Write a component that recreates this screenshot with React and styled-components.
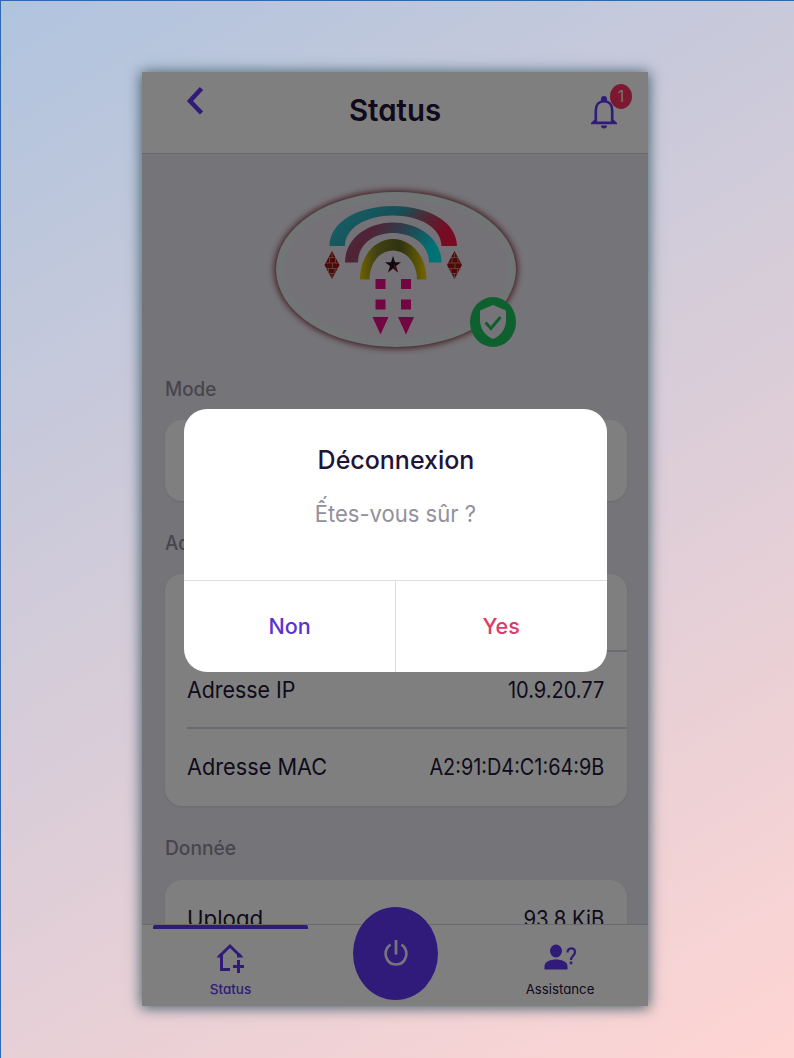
import React from 'react';
import styled, { createGlobalStyle } from 'styled-components';

const Global = createGlobalStyle`
  * { box-sizing: border-box; }
  body {
    margin: 0;
    font-family: Inter, "Noto Sans", sans-serif;
    font-feature-settings: "cv11" 1;
    color: #201438;
  }
  button { font: inherit; font-feature-settings: inherit; border: 0; padding: 0; background: none; }
`;

const Page = styled.div`
  height: 1058px;
  padding: 71px 0 0 141px;
  border: solid #2f67b0;
  border-width: 1px 0 0 1px;
  background: linear-gradient(149deg, #b0c4de 0%, #ffd5d3 100%);
`;

const Phone = styled.div`
  position: relative;
  width: 506px;
  height: 934px;
  display: flex;
  flex-direction: column;
  background: #ebe9f3;
  box-shadow: 0 1px 13px 1px #40606c;
`;

const Header = styled.header`
  height: 82px;
  flex: none;
  display: grid;
  grid-template-columns: 100px 1fr 100px;
  background: #fff;
  border-bottom: 1px solid #d4d2de;
`;

const Back = styled.button`
  align-self: start;
  padding: 14px 0 0 44px;
  text-align: left;
  svg { display: block; }
`;

const Heading = styled.h1`
  margin: 0;
  padding-top: 19px;
  text-align: center;
  font-size: 30px;
  line-height: 38px;
  font-weight: 600;
`;

const Bell = styled.div`
  position: relative;
  padding: 22px 0 0 41px;
  svg { display: block; }
`;

const Count = styled.span`
  position: absolute;
  left: 62px;
  top: 12px;
  width: 22px;
  height: 25px;
  border-radius: 50%;
  background: #f8315f;
  color: #f2dfe8;
  font-size: 16px;
  line-height: 25px;
  text-align: center;
`;

const Main = styled.main`
  flex: 1;
  min-height: 0;
  overflow: hidden;
  padding: 38px 21px 0 23px;
`;

const Emblem = styled.div`
  position: relative;
  width: 240px;
  height: 155px;
  margin-left: 111px;
  border: 8px solid #e3eaea;
  border-radius: 50%;
  background: #e9e4ec;
  box-shadow: 0 0 7px 1px #6e1a1e;
`;

const EmblemArt = styled.svg`
  display: block;
  margin: 6px 0 0 40px;
`;

const Shield = styled.div`
  position: absolute;
  left: 186px;
  top: 97px;
  width: 46px;
  height: 50px;
  border-radius: 50%;
  background: #1cc35d;
  display: grid;
  place-items: center;
`;

const SectionTitle = styled.h2`
  margin: 30px 0 ${(p) => p.$gap || 19}px;
  height: 24px;
  font-size: 19.5px;
  line-height: 24px;
  font-weight: 500;
  color: #8f8b9a;
`;

const Card = styled.section`
  min-height: 81px;
  padding-left: 22px;
  border-radius: 17px;
  background: #fff;
  box-shadow: 0 1px 3px #d5d3de;
`;

const AddressCard = styled(Card)`
  height: 232px;
`;

const Row = styled.div`
  height: 77px;
  padding-right: 23px;
  display: flex;
  align-items: center;
  justify-content: space-between;
  font-size: 22.5px;
  & + & { border-top: 2px solid #d7d5e3; }
`;

const EmptyRow = styled.div`
  height: 76px;
  & + ${Row} { border-top: 2px solid #d7d5e3; }
`;

const Label = styled.span`
  display: inline-block;
  transform: scaleX(${(p) => p.$fit || 1});
  transform-origin: ${(p) => p.$from || 'center'};
`;

const Nav = styled.nav`
  height: 82px;
  flex: none;
  display: grid;
  grid-template-columns: 155px 1fr 155px;
  padding: 0 10px 0 11px;
  background: #fff;
  border-top: 1px solid #d4d2de;
`;

const Tab = styled.div`
  border-top: 4px solid ${(p) => (p.$active ? '#6038f0' : 'transparent')};
  border-radius: 2px;
  padding-top: 13px;
  display: flex;
  flex-direction: column;
  align-items: center;
  gap: 6px;
  font-size: 13.5px;
  line-height: 18px;
  font-weight: ${(p) => (p.$active ? 500 : 400)};
  color: ${(p) => (p.$active ? '#6038f0' : '#201438')};
  svg { display: block; margin-right: 1px; }
`;

const Power = styled.button`
  width: 85px;
  height: 93px;
  margin-top: -18px;
  padding-bottom: 3px;
  justify-self: center;
  border-radius: 50%;
  background: #6035f5;
  display: grid;
  place-items: center;
`;

const Backdrop = styled.div`
  position: absolute;
  inset: 0;
  padding: 336.5px 41px 0 42px;
  background: rgba(0, 0, 0, 0.5);
`;

const Dialog = styled.div`
  height: 263px;
  border-radius: 23px;
  overflow: hidden;
  background: #fff;
  display: flex;
  flex-direction: column;
`;

const DialogBody = styled.div`
  flex: 1;
  padding-top: 35px;
  text-align: center;
`;

const DialogTitle = styled.div`
  font-size: 25.5px;
  line-height: 32px;
  font-weight: 500;
`;

const DialogText = styled.div`
  margin-top: 22px;
  font-size: 22.5px;
  line-height: 32px;
  color: #93909c;
`;

const Actions = styled.div`
  height: 91.5px;
  display: grid;
  grid-template-columns: 212px 1fr;
  border-top: 1.5px solid #dddde3;
`;

const Action = styled.button`
  color: ${(p) => p.$color};
  font-size: 22px;
  font-weight: 500;
  &:first-child { border-right: 1px solid #dddde3; }
`;

const Brick = ({ x }) => (
  <g transform={`translate(${x} 45)`}>
    <path d="M7.5 0L15 14 7.5 28 0 14Z" fill="#a5120c" />
    <path d="M4 6.5H11M1 12H14M1.5 17.5H13.500M4 22.500H11M7.500 2V6.500M5 6.500V12M11 6.500V12M8 12V17.500M4 17.500V22M10.500 17.500V22.500M7.500 22.500V27" stroke="#b99a9f" strokeWidth=".8" />
  </g>
);

export default function App() {
  return (
    <>
      <Global />
      <Page>
        <Phone>
          <Header>
            <Back aria-label="Retour">
              <svg width="19" height="30" viewBox="0 0 19 30" fill="none">
                <path d="M15.500 2.500L4 15 15.500 27" stroke="#6038f0" strokeWidth="4.600" />
              </svg>
            </Back>
            <Heading><Label $fit={0.98}>Status</Label></Heading>
            <Bell>
              <svg width="30" height="36" viewBox="0 0 30 36">
                <path d="M6.800 28V16.500C6.800 10.500 10 7.200 15 7.200S23.200 10.500 23.200 16.500V28" fill="none" stroke="#6038f0" strokeWidth="2.600" />
                <path d="M12 7V5a3 3 0 0 1 6 0V7ZM5.500 25.500L8 27.500H22L24.500 25.500 28 29v1.200H2V29ZM12 31.500h6a3 3 0 0 1-6 0Z" fill="#6038f0" />
              </svg>
              <Count>1</Count>
            </Bell>
          </Header>
          <Main>
            <Emblem>
              <EmblemArt width="146" height="130" viewBox="0 0 146 130">
                <defs>
                  <linearGradient id="outer" x1="0" y1="0" x2="1" y2="0.3">
                    <stop offset="0" stopColor="#27c7cf" /><stop offset=".55" stopColor="#309eae" />
                    <stop offset=".72" stopColor="#8a6076" /><stop offset="1" stopColor="#ee1647" />
                  </linearGradient>
                  <linearGradient id="middle" x1="0" y1="0" x2="1" y2="0.3">
                    <stop offset="0" stopColor="#7e6a96" /><stop offset=".3" stopColor="#a44368" />
                    <stop offset=".65" stopColor="#4c8aa2" /><stop offset="1" stopColor="#00e5ec" />
                  </linearGradient>
                  <linearGradient id="inner" x1="0" y1="0" x2="1" y2="0">
                    <stop offset="0" stopColor="#d9c400" /><stop offset=".25" stopColor="#85832b" />
                    <stop offset=".6" stopColor="#5d6521" /><stop offset="1" stopColor="#e8cd00" />
                  </linearGradient>
                </defs>
                <path d="M5.500 40C5.500 16 34 0 69 0S133 16 133 40H117.500C117.500 22 96 9.500 69 9.500S21 22 21 40Z" fill="url(#outer)" />
                <path d="M21 56.500C21 33 43 16.500 69 16.500S117.500 33 117.500 56.500H105C105 39 89 27 69 27S34 39 34 56.500Z" fill="url(#middle)" />
                <path d="M36 73.500C36 51 50 33 69 33S102.500 51 102.500 73.500H93C93 58 83 44.500 69 44.500S45.500 58 45.500 73.500Z" fill="url(#inner)" />
                <path d="M69 50l2 6.200h6l-5 3.800 2 6.500-5-4-5 4 2-6.500-5-3.800h6Z" fill="#24121c" />
                <path d="M70 58l4 8.500-4-3.500Z" fill="#a0182c" />
                <Brick x={0.5} />
                <Brick x={123} />
                <path d="M51.500 73h10v10h-10ZM77 73h10v10h-10ZM51.500 93.500h10v10h-10ZM77 93.500h10v10h-10ZM48.500 111h16l-8 17.500ZM74 111h16l-8 17.500Z" fill="#e80b86" />
              </EmblemArt>
              <Shield>
                <svg width="28" height="36" viewBox="0 0 28 36">
                  <path d="M14 1L27 6.500V16C27 25 21.500 32 14 35 6.500 32 1 25 1 16V6.500Z" fill="#ece9f2" />
                  <path d="M6.500 18.500L12 24.500 21.500 13" fill="none" stroke="#1cc35d" strokeWidth="3" />
                </svg>
              </Shield>
            </Emblem>
            <SectionTitle><Label $fit={0.965} $from="left">Mode</Label></SectionTitle>
            <Card />
            <SectionTitle><Label $fit={0.965} $from="left">Adresse</Label></SectionTitle>
            <AddressCard>
              <EmptyRow />
              <Row>
                <Label $fit={0.95} $from="left">Adresse IP</Label>
                <Label $fit={0.89} $from="right">10.9.20.77</Label>
              </Row>
              <Row>
                <Label $fit={0.965} $from="left">Adresse MAC</Label>
                <Label $fit={0.882} $from="right">A2:91:D4:C1:64:9B</Label>
              </Row>
            </AddressCard>
            <SectionTitle $gap={20}><Label $fit={0.985} $from="left">Donnée</Label></SectionTitle>
            <Card>
              <Row>
                <Label $fit={0.99} $from="left">Upload</Label>
                <Label $fit={0.905} $from="right">93.8 KiB</Label>
              </Row>
            </Card>
          </Main>
          <Nav>
            <Tab $active>
              <svg width="30" height="32" viewBox="0 0 30 32" fill="none">
                <path d="M4.500 14.300L15 4 25.500 14.300" stroke="#6038f0" strokeWidth="3" />
                <path d="M1.500 15.500L5 11.500H8V15.500ZM28.500 15.500L25 11.500H22V15.500Z" fill="#6038f0" />
                <path d="M6.500 14V27.500H15" stroke="#6038f0" strokeWidth="3" />
                <path d="M23.500 18V31M18 24.500H29" stroke="#6038f0" strokeWidth="3" />
              </svg>
              <Label>Status</Label>
            </Tab>
            <Power aria-label="Déconnexion">
              <svg width="26" height="30" viewBox="0 0 26 30" fill="none">
                <path d="M13 3V17.500" stroke="#eeeaf8" strokeWidth="2.800" />
                <path d="M7.500 7.500C-1 14 2.500 27.500 13 27.500S27 14 18.500 7.500" stroke="#eeeaf8" strokeWidth="2.600" />
              </svg>
            </Power>
            <Tab>
              <svg width="32" height="32" viewBox="0 0 32 32">
                <ellipse cx="12" cy="9" rx="6" ry="6.500" fill="#6038f0" />
                <path d="M0.500 27.500V24C0.500 19.500 7 17.500 12 17.500S23.500 19.500 23.500 24V27.500Z" fill="#6038f0" />
                <path d="M23.500 10.500C23.500 5 31 5 31 10 31 13.500 27 14 27 18" fill="none" stroke="#6038f0" strokeWidth="2.200" />
                <path d="M25.800 19.500h2.500v2.700h-2.500Z" fill="#6038f0" />
              </svg>
              <Label $fit={0.98}>Assistance</Label>
            </Tab>
          </Nav>
          <Backdrop>
            <Dialog role="dialog">
              <DialogBody>
                <DialogTitle><Label $fit={0.98}>Déconnexion</Label></DialogTitle>
                <DialogText><Label $fit={0.98}>Ếtes-vous sûr ?</Label></DialogText>
              </DialogBody>
              <Actions>
                <Action $color="#5b34d0"><Label $fit={0.98}>Non</Label></Action>
                <Action $color="#dc3c6c"><Label $fit={0.98}>Yes</Label></Action>
              </Actions>
            </Dialog>
          </Backdrop>
        </Phone>
      </Page>
    </>
  );
}
